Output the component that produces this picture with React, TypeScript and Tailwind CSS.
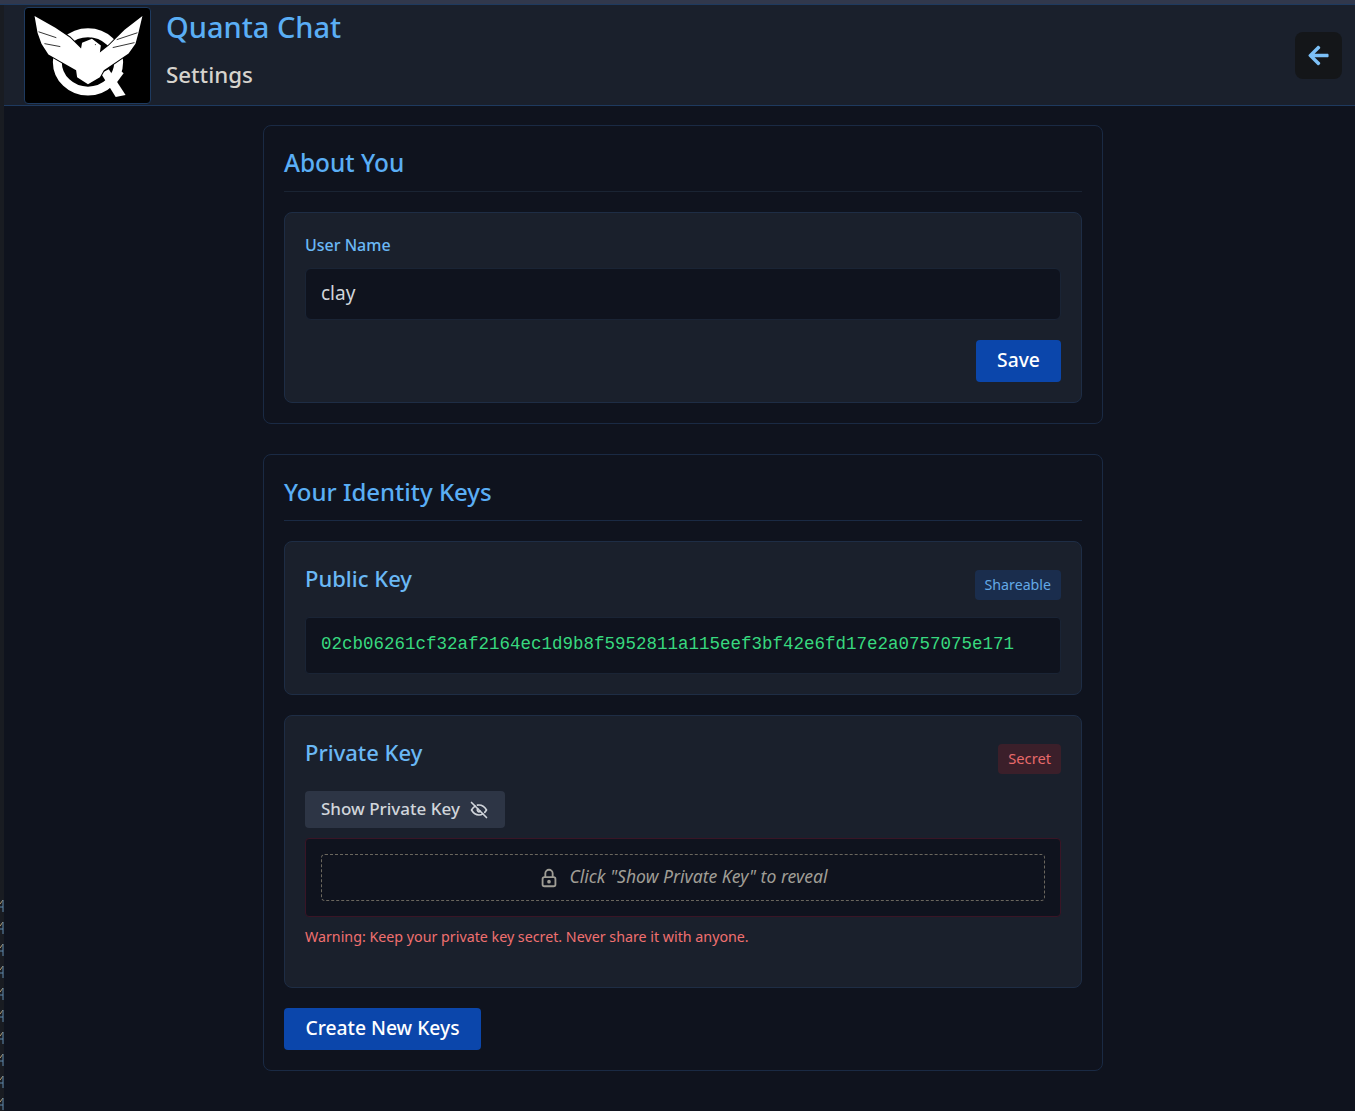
import React from 'react'
import { TbLock, TbEyeOff } from 'react-icons/tb'
import { FaArrowLeft } from 'react-icons/fa'

const marks = [0, 1, 2, 3, 4, 5, 6, 7, 8, 9]

function Logo() {
  return (
    <svg viewBox="0 0 125 96" className="w-full h-full blur-[0.5px]">
      <ellipse cx="63" cy="54.5" rx="31" ry="29.5" fill="none" stroke="#fff" strokeWidth="9" />
      <path d="M76 66 L84 62 L101 88 L91 90 Z" fill="#fff" />
      <path d="M85 70 L93 61 L99 66 L90 78 Z" fill="#fff" />
      <path
        d="M9 8 L30 20 L45 30 L56 41 L57 35 L67 31 L76 38 L75 45 L84 38 L100 22 L118 8 L114 25 L111 36 L104 46 L79 63 L75 70 L63 77 L52 70 L51 63 L23 47 L16 36 L12 25 Z"
        fill="#fff"
        stroke="#000"
        strokeWidth="2"
        strokeLinejoin="round"
        paintOrder="stroke"
      />
      <path d="M13 24 L31 30 M19 36 L35 39 M92 32 L113 25 M88 40 L110 35 M70 37 h1" stroke="#000" strokeWidth="0.8" fill="none" />
    </svg>
  )
}

export default function App() {
  return (
    <div className="min-h-[1111px] bg-[#0f131e] font-['Noto_Sans',sans-serif] text-gray-200 flex flex-col">
      <div className="h-[5px] bg-[#31384c] border-b border-[#1e3a5f]" />
      <div className="flex-1 flex">
        <div className="w-[4px] bg-[#191c22] pt-[894px] flex flex-col gap-[9px] overflow-hidden">
          {marks.map((m) => (
            <svg key={m} width="4" height="13" viewBox="0 0 4 13" className="shrink-0">
              <path d="M0 5 L3 1" stroke="#b09a70" strokeWidth="1" fill="none" />
              <path d="M0 8 H3 M3 1 V13" stroke="#5f87ab" strokeWidth="1" fill="none" />
            </svg>
          ))}
        </div>
        <div className="flex-1 flex flex-col">
          <header className="h-[101px] bg-[#1a202c] border-b border-[#1e3a5f] flex items-center pl-[20px] pr-[13px]">
            <div className="w-[127px] h-[97px] bg-black rounded border border-[#1e3a5f] overflow-hidden">
              <Logo />
            </div>
            <div className="ml-[15px] flex-1 flex flex-col h-full">
              <h1 className="text-[29px] leading-[43px] text-[#5aaef5] font-medium">Quanta Chat</h1>
              <p className="mt-[10px] text-[22.3px] leading-[34px] text-[#d6d3cd] font-medium">Settings</p>
            </div>
            <button className="w-[47px] h-[47px] rounded-lg bg-[#141619] flex items-center justify-center text-[#7cc0f7]">
              <FaArrowLeft size={23} />
            </button>
          </header>

          <main className="w-[840px] ml-[259px] pt-[19px]">
            <section className="rounded-lg border border-[#1a2a44] p-5">
              <h2 className="text-[24.4px] leading-[34px] text-[#5aaef5] font-medium pb-[11px] border-b border-[#1a2433]">About You</h2>
              <div className="mt-5 rounded-lg bg-[#1a202c] border border-[#1e2d45] px-5 pt-5 pb-5">
                <label className="block text-[16px] leading-6 text-[#6ab8f5] font-medium">User Name</label>
                <div className="mt-[11px] h-[52px] rounded-md bg-[#0f131e] border border-[#1a2435] flex items-center px-[15px] pb-[2px] text-[19px] text-[#d1d5db]">clay</div>
                <div className="mt-5 flex justify-end">
                  <button className="h-[42px] w-[85px] pb-[2px] rounded bg-[#0b46ab] text-white text-[19.3px] font-medium">Save</button>
                </div>
              </div>
            </section>

            <section className="mt-[30px] rounded-lg border border-[#1a2a44] p-5">
              <h2 className="text-[24px] leading-[34px] text-[#5aaef5] font-medium pb-[11px] border-b border-[#1a2a44]">Your Identity Keys</h2>

              <div className="mt-5 rounded-lg bg-[#1a202c] border border-[#1e2d45] px-5 pt-5 pb-5">
                <div className="flex justify-between items-start h-[55px]">
                  <h3 className="text-[22px] leading-[32px] text-[#6ab8f5] font-medium">Public Key</h3>
                  <span className="mt-2 h-[30px] px-[10px] pb-[1px] flex items-center rounded bg-[#1a2d4d] text-[#63a9e6] text-[14.2px]">Shareable</span>
                </div>
                <div className="h-[57px] rounded bg-[#0f131e] border border-[#1a2435] flex items-center px-[15px] pb-[2px] font-['Liberation_Mono',monospace] text-[17.5px] text-[#38d97f]">
                  02cb06261cf32af2164ec1d9b8f5952811a115eef3bf42e6fd17e2a0757075e171
                </div>
              </div>

              <div className="mt-5 rounded-lg bg-[#1a202c] border border-[#1e2d45] px-5 pt-5 pb-[39px]">
                <div className="flex justify-between items-start h-[55px]">
                  <h3 className="text-[22px] leading-[32px] text-[#6ab8f5] font-medium">Private Key</h3>
                  <span className="mt-2 h-[30px] px-[10px] pb-[1px] flex items-center rounded bg-[#3b1f2a] text-[#e86a6a] text-[14.7px]">Secret</span>
                </div>
                <button className="h-[37px] w-[200px] rounded bg-[#2d3545] pb-[2px] text-[#d1d5db] text-[17px] font-medium flex items-center pl-4">
                  Show Private Key
                  <TbEyeOff className="ml-[9px] mt-[2px]" size={20} />
                </button>
                <div className="mt-[10px] h-[79px] rounded bg-[#0f131e] border border-[#3a1526] p-[15px]">
                  <div className="h-full rounded border border-dashed border-[#6b675e] pb-[2px] flex items-center justify-center text-[#a09e96] text-[17.6px] italic">
                    <TbLock size={22} className="mr-[9px] mt-[2px]" />
                    Click "Show Private Key" to reveal
                  </div>
                </div>
                <p className="mt-[9px] text-[14.25px] leading-[22px] text-[#f07070]">Warning: Keep your private key secret. Never share it with anyone.</p>
              </div>

              <button className="mt-5 h-[42px] w-[197px] pb-[2px] rounded bg-[#0b46ab] text-white text-[19.3px] font-medium">Create New Keys</button>
            </section>
          </main>
        </div>
      </div>
    </div>
  )
}
